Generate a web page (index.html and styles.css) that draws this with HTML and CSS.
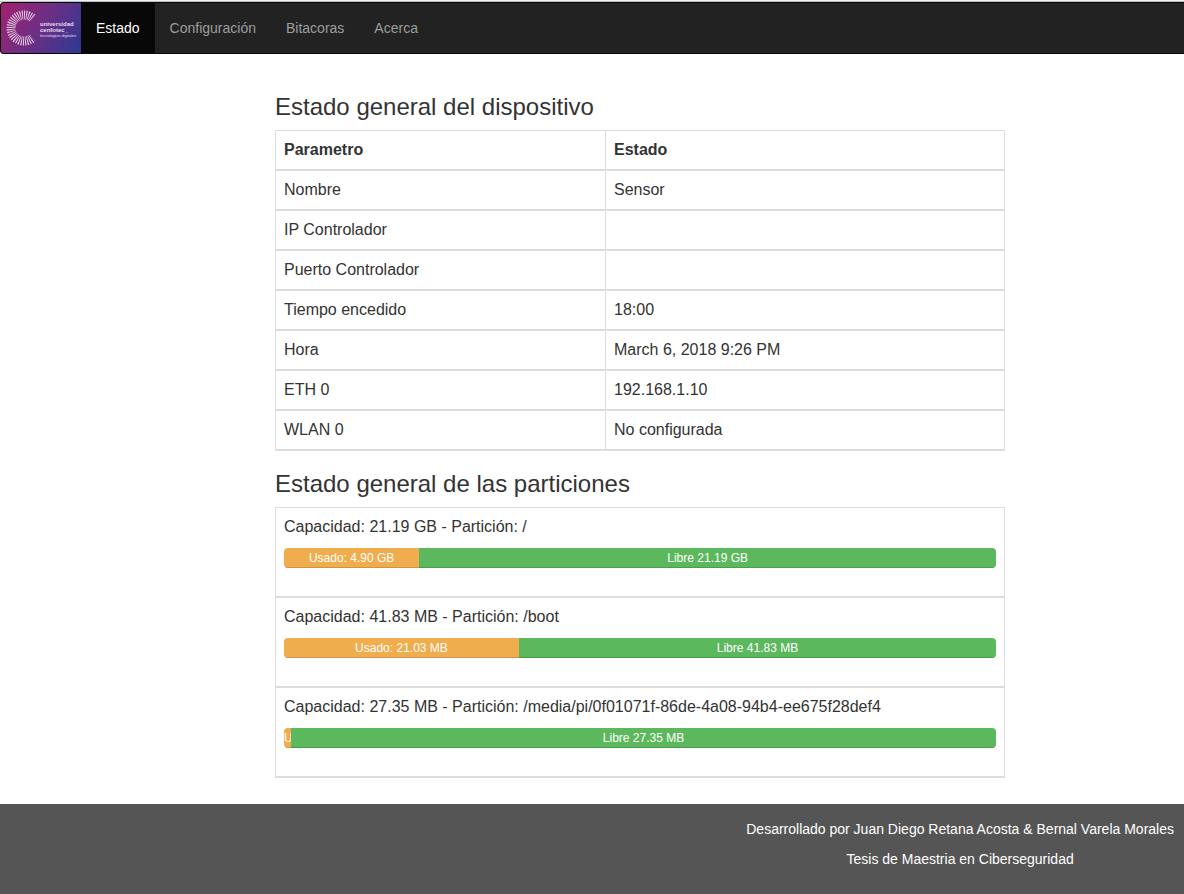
FILE: index.html
```
<!DOCTYPE html>
<html lang="es">
<head>
<meta charset="utf-8">
<title>Estado</title>
<link rel="stylesheet" href="styles.css">
</head>
<body>
<nav class="navbar">
  <a class="brand" href="#" aria-label="universidad cenfotec">
    <svg class="logo" viewBox="0 0 80 50" width="80" height="50">
      <defs>
        <linearGradient id="brand-fill" x1="0" y1="0" x2="80" y2="50" gradientUnits="userSpaceOnUse">
          <stop offset="0" stop-color="#a3216e"/>
          <stop offset="0.5" stop-color="#6b2f86"/>
          <stop offset="1" stop-color="#2b3993"/>
        </linearGradient>
        <mask id="gap" maskUnits="userSpaceOnUse" x="0" y="0" width="80" height="50">
          <rect width="80" height="50" fill="#fff"/>
          <path d="M23 25 L42 3 V47 Z" fill="#000"/>
        </mask>
      </defs>
      <rect width="80" height="50" fill="url(#brand-fill)"/>
      <!-- ring of rays, open on the right -->
      <g mask="url(#gap)">
        <circle cx="23" cy="25" r="13" fill="none" stroke="#dcc3dd" stroke-width="9" stroke-dasharray="1 1" pathLength="80"/>
      </g>
      <g class="logo-text" fill="#e9dcee">
        <text x="39" y="23">universidad</text>
        <text x="39" y="29">cenfotec_</text>
        <text class="logo-small" x="39" y="34">tecnologías digitales</text>
      </g>
    </svg>
  </a>
  <ul class="menu">
    <li><a class="menu-link active" href="#">Estado</a></li>
    <li><a class="menu-link" href="#">Configuración</a></li>
    <li><a class="menu-link" href="#">Bitacoras</a></li>
    <li><a class="menu-link" href="#">Acerca</a></li>
  </ul>
</nav>
<main class="page">
  <div class="content">
    <h3 class="title">Estado general del dispositivo</h3>
    <table class="table">
      <colgroup><col class="col-name"><col></colgroup>
      <thead><tr><th>Parametro</th><th>Estado</th></tr></thead>
      <tbody>
        <tr><td>Nombre</td><td>Sensor</td></tr>
        <tr><td>IP Controlador</td><td></td></tr>
        <tr><td>Puerto Controlador</td><td></td></tr>
        <tr><td>Tiempo encedido</td><td>18:00</td></tr>
        <tr><td>Hora</td><td>March 6, 2018 9:26 PM</td></tr>
        <tr><td>ETH 0</td><td>192.168.1.10</td></tr>
        <tr><td>WLAN 0</td><td>No configurada</td></tr>
      </tbody>
    </table>
    <h3 class="title">Estado general de las particiones</h3>
    <table class="table">
      <tbody>
        <tr><td>
          <p class="capacity">Capacidad: 21.19 GB - Partición: /</p>
          <div class="progress"><div class="bar used" style="width:19%">Usado: 4.90 GB</div><div class="bar free" style="width:81%">Libre 21.19 GB</div></div>
        </td></tr>
        <tr><td>
          <p class="capacity">Capacidad: 41.83 MB - Partición: /boot</p>
          <div class="progress"><div class="bar used" style="width:33%">Usado: 21.03 MB</div><div class="bar free" style="width:67%">Libre 41.83 MB</div></div>
        </td></tr>
        <tr><td>
          <p class="capacity">Capacidad: 27.35 MB - Partición: /media/pi/0f01071f-86de-4a08-94b4-ee675f28def4</p>
          <div class="progress"><div class="bar used" style="width:1%">U</div><div class="bar free" style="width:99%">Libre 27.35 MB</div></div>
        </td></tr>
      </tbody>
    </table>
  </div>
</main>
<footer class="footer">
  <div class="credits">
    <p>Desarrollado por Juan Diego Retana Acosta &amp; Bernal Varela Morales</p>
    <p>Tesis de Maestria en Ciberseguridad</p>
  </div>
</footer>
</body>
</html>
```
FILE: styles.css
```
* { box-sizing: border-box; }
body {
  margin: 0;
  padding-top: 2px;
  min-height: 100vh;
  display: flex;
  flex-direction: column;
  background: linear-gradient(#f0f2f2 1px, #b9c2c2 1px, #b9c2c2 2px, #fff 2px);
  color: #333;
  font: 14px/20px "Liberation Sans", Arial, sans-serif;
}
p { margin: 0 0 10px; }
.navbar {
  display: flex;
  margin-bottom: 20px;
  background: #222;
  border: 1px solid #080808;
  border-right: 0;
  border-radius: 4px 0 0 4px;
}
.brand, .logo { display: block; }
.logo { border-radius: 3px 0 0 3px; }
.logo-text { font: bold 6px "Liberation Sans", Arial, sans-serif; }
.logo-small { font-size: 4px; font-weight: normal; }
.menu { display: flex; margin: 0; padding: 0; list-style: none; }
.menu-link {
  display: block;
  padding: 15px;
  color: #9d9d9d;
  text-decoration: none;
}
.menu-link.active { background: #080808; color: #fff; }
.page {
  flex: 1;
  display: grid;
  grid-template-columns: 275fr 730fr 179fr;
}
.content { grid-column: 2; min-width: 0; }
.title {
  margin: 20px 0 10px;
  font-size: 24px;
  font-weight: 500;
  line-height: 26px;
}
.table {
  width: 100%;
  margin-bottom: 20px;
  border-spacing: 0;
  border-top: 1px solid #ddd;
  border-left: 1px solid #ddd;
  table-layout: fixed;
  font-size: 16px;
  line-height: 22px;
}
.col-name { width: 330px; }
.table th, .table td {
  height: 40px;
  padding: 8px;
  border-right: 1px solid #ddd;
  border-bottom: 2px solid #ddd;
  text-align: left;
  vertical-align: top;
}
.progress {
  display: flex;
  height: 20px;
  margin-bottom: 20px;
  overflow: hidden;
  border-radius: 4px;
  background: #f5f5f5;
}
.bar {
  flex: none;
  overflow: hidden;
  color: #fff;
  font-size: 12px;
  line-height: 20px;
  text-align: center;
  box-shadow: inset 0 -1px 0 rgba(0, 0, 0, 0.15);
}
.used { background-color: #f0ad4e; }
.free { background-color: #5cb85c; }
.footer {
  display: flex;
  justify-content: flex-end;
  margin-top: 6px;
  padding: 15px 10px;
  background: #555;
  color: #fff;
  text-align: center;
}
```
